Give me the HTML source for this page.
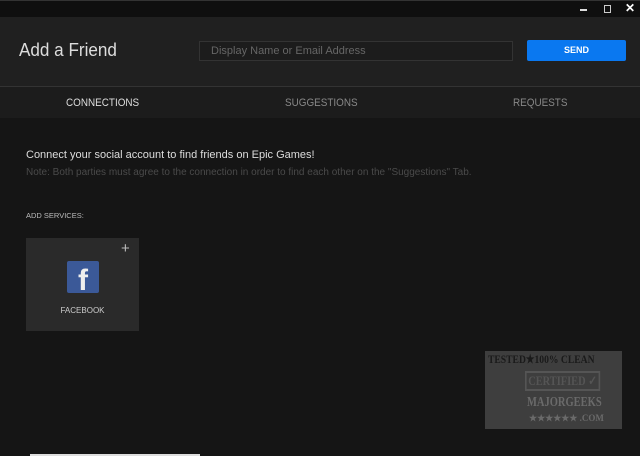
<!DOCTYPE html>
<html><head><style>
*{margin:0;padding:0;box-sizing:border-box}
body{width:640px;height:456px;background:#151515;font-family:"Liberation Sans",sans-serif;position:relative;overflow:hidden}
.top{position:absolute;left:0;top:0;width:640px;height:17px;background:#0f0f0f;border-top:1px solid #333}
.hdr{position:absolute;left:0;top:17px;width:640px;height:69px;background:#202020}
.tabs{position:absolute;left:0;top:86px;width:640px;height:32px;background:#1c1c1c;border-top:1px solid #333}
.t{position:absolute;top:10px;font-size:11px;color:#888;transform:scaleX(0.9);transform-origin:left}
.abs{position:absolute;white-space:nowrap}
</style></head><body>
<div class="top">
 <div class="abs" style="left:580px;top:8px;width:7px;height:2px;background:#ddd"></div>
 <div class="abs" style="left:604px;top:4px;width:7px;height:8px;border:1px solid #ccc"></div>
 <div class="abs" style="left:625px;top:0px;color:#fff;font-size:12px;font-weight:bold">✕</div>
</div>
<div class="hdr">
 <div class="abs" style="left:19px;top:23px;color:#ddd;font-size:18px;font-weight:300;transform:scaleX(0.95);transform-origin:left">Add a Friend</div>
 <div class="abs" style="left:199px;top:24px;width:314px;height:20px;background:#1c1c1c;border:1px solid #333;color:#666;font-size:11px;padding:3px 11px">Display Name or Email Address</div>
 <div class="abs" style="left:527px;top:23px;width:99px;height:21px;background:#0a78f0;color:#fff;font-size:9px;font-weight:bold;text-align:center;line-height:21px;border-radius:2px">SEND</div>
</div>
<div class="tabs">
 <div class="t" style="left:66px;color:#ddd">CONNECTIONS</div>
 <div class="t" style="left:285px">SUGGESTIONS</div>
 <div class="t" style="left:513px">REQUESTS</div>
</div>
<div class="abs" style="left:26px;top:149px;color:#ddd;font-size:11px">Connect your social account to find friends on Epic Games!</div>
<div class="abs" style="left:26px;top:167px;color:#4a4a4a;font-size:10px">Note: Both parties must agree to the connection in order to find each other on the "Suggestions" Tab.</div>
<div class="abs" style="left:26px;top:211px;color:#bbb;font-size:7.5px">ADD SERVICES:</div>
<div class="abs" style="left:26px;top:238px;width:113px;height:93px;background:#2a2a2a">
 <div class="abs" style="left:95px;top:2px;color:#bbb;font-size:15px">+</div>
 <div class="abs" style="left:41px;top:23px;width:32px;height:32px;background:#3b5998;border-radius:2px;color:#eee;font-size:30px;font-weight:bold;text-align:center;line-height:40px;overflow:hidden">f</div>
 <div class="abs" style="left:0;top:68px;width:113px;text-align:center;color:#ccc;font-size:8px">FACEBOOK</div>
</div>
<div class="abs" style="left:485px;top:351px;width:137px;height:78px;background:#3e3e3e;color:#1a1a1a;font-family:'Liberation Serif',serif;font-weight:bold;overflow:hidden">
 <div class="abs" style="left:3px;top:1px;font-size:12px;transform:scaleX(0.8);transform-origin:left">TESTED★100% CLEAN</div>
 <div class="abs" style="left:40px;top:20px;font-size:13px;color:#555;border:2px solid #555;padding:0 2px;transform:scaleX(0.8);transform-origin:left">CERTIFIED ✓</div>
 <div class="abs" style="left:42px;top:44px;font-size:14px;color:#6a6a6a;transform:scaleX(0.75);transform-origin:left">MAJORGEEKS</div>
 <div class="abs" style="left:44px;top:62px;font-size:9px;color:#6a6a6a">★★★★★★ .COM</div>
</div>
<div class="abs" style="left:30px;top:454px;width:170px;height:2px;background:#ddd"></div>
</body></html>
